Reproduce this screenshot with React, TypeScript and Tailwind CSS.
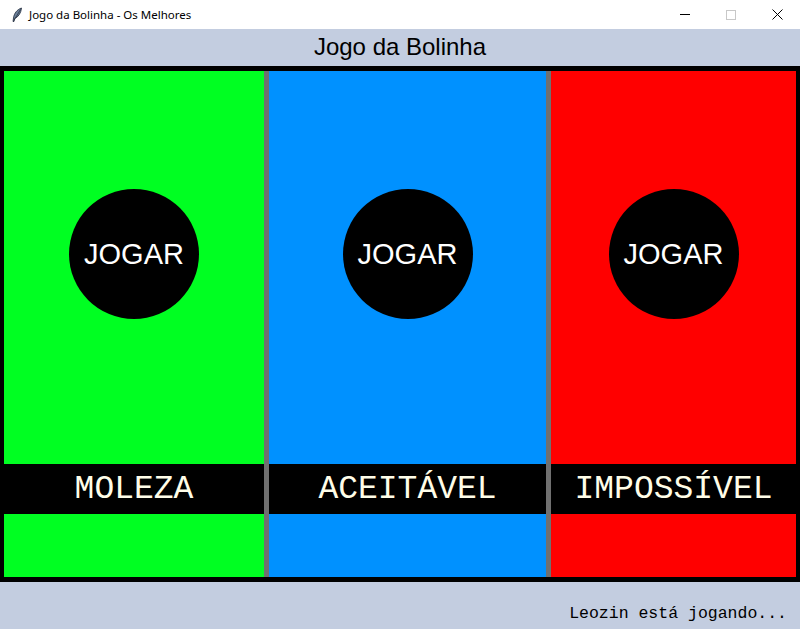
import React from 'react';

const levels = [
    { name: "MOLEZA", bg: "bg-[#00ff22]", width: "w-[260px]" },
    { name: "ACEITÁVEL", bg: "bg-[#0091ff]", width: "w-[277px]" },
    { name: "IMPOSSÍVEL", bg: "bg-[#ff0000]", width: "flex-1" },
];

const Feather = () => (
    <svg width="12" height="16" viewBox="0 0 12 16">
        <path d="M10.5 1 C6 2.5 3 6.5 2.5 11 L2 14.5 L3 14.5 L3.6 11.5 C7.5 10 10 6 10.5 1 Z" fill="#6b7f99" stroke="#1f2a3a" strokeWidth="0.8" />
        <path d="M9.5 2.5 L3 13.5" stroke="#1f2a3a" strokeWidth="0.7" />
    </svg>
);

export default function App() {
    return (
        <div className="w-[800px] h-[629px] flex flex-col bg-[#c3cde0] overflow-hidden">
            {/* Window title bar */}
            <div className="h-[29px] bg-white flex items-center shrink-0">
                <div className="pl-[11px] pr-[6px] flex items-center">
                    <Feather />
                </div>
                <span className="text-[11.5px] text-black" style={{ fontFamily: '"Noto Sans", "Open Sans", sans-serif' }}>
                    Jogo da Bolinha - Os Melhores
                </span>
                <div className="ml-auto flex items-center h-full">
                    <div className="w-[46px] h-full flex items-center justify-center">
                        <div className="w-[10px] h-[1px] bg-black" />
                    </div>
                    <div className="w-[46px] h-full flex items-center justify-center">
                        <div className="w-[10px] h-[10px] border border-[#c8c8c8]" />
                    </div>
                    <div className="w-[46px] h-full flex items-center justify-center">
                        <svg width="11" height="11" viewBox="0 0 11 11">
                            <path d="M0.5 0.5 L10.5 10.5 M10.5 0.5 L0.5 10.5" stroke="#000" strokeWidth="1" />
                        </svg>
                    </div>
                </div>
            </div>

            {/* Header */}
            <div className="h-[37px] shrink-0 flex items-center justify-center">
                <span className="text-[24px] text-black leading-none pb-[1px]" style={{ fontFamily: '"Liberation Sans", Arial, sans-serif' }}>
                    Jogo da Bolinha
                </span>
            </div>

            {/* Game board */}
            <div className="h-[516px] shrink-0 bg-black border-t-[5px] border-b-[5px] border-l-[4px] border-r-[4px] border-black flex">
                {levels.map((lvl, i) => (
                    <React.Fragment key={lvl.name}>
                        {i > 0 && <div className="w-[5px] bg-[#707070] shrink-0" />}
                        <div className={`${lvl.width} flex flex-col`}>
                            <div className={`h-[393px] ${lvl.bg} flex justify-center pt-[118px]`}>
                                <div className="w-[130px] h-[130px] rounded-full bg-black flex items-center justify-center">
                                    <span className="text-[29px] text-white leading-none" style={{ fontFamily: '"Liberation Sans", Arial, sans-serif' }}>
                                        JOGAR
                                    </span>
                                </div>
                            </div>
                            <div className="h-[50px] bg-black flex items-center justify-center">
                                <span className="text-[33px] text-[#fffde8] leading-none" style={{ fontFamily: '"Courier New", Courier, "Liberation Mono", monospace' }}>
                                    {lvl.name}
                                </span>
                            </div>
                            <div className={`flex-1 ${lvl.bg}`} />
                        </div>
                    </React.Fragment>
                ))}
            </div>

            {/* Status line */}
            <div className="flex-1 flex items-end justify-end pr-[13px] pb-[6px]">
                <span className="text-[16.5px] text-black leading-[18px]" style={{ fontFamily: '"Courier New", Courier, "Liberation Mono", monospace' }}>
                    Leozin está jogando...
                </span>
            </div>
        </div>
    );
}
